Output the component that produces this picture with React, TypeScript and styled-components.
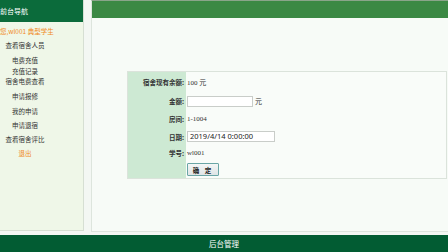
import styled, { createGlobalStyle } from "styled-components";

const GlobalStyle = createGlobalStyle`
  html, body {
    margin: 0;
    padding: 0;
    background: #f3f7f3;
    font-family: "Noto Sans CJK SC", "Noto Sans", sans-serif;
  }
`

const Page = styled.div`
  width: 448px;
  height: 252px;
  display: flex;
  flex-direction: column;
  overflow: hidden;
`

const Main = styled.div`
  flex: 1;
  display: flex;
  gap: 7px;
  padding-bottom: 3px;
`

const Sidebar = styled.aside`
  width: 84px;
  height: 231px;
  box-sizing: border-box;
  background: #eff7e8;
  border-right: 1px solid #d6dfd3;
  border-bottom: 1px solid #d6dfd3;
  overflow: hidden;
`

const SideHeader = styled.div`
  height: 22px;
  background: #0b6b3b;
  color: #ffffff;
  font-size: 7px;
  line-height: 22px;
  white-space: nowrap;
`

const Welcome = styled.div`
  margin-top: 4px;
  height: 10px;
  line-height: 10px;
  font-size: 6.5px;
  color: #f08a24;
  white-space: nowrap;
`

const NavList = styled.ul`
  list-style: none;
  margin: 0;
  padding: 0;
  width: 50px;
`

const NavItem = styled.li<{ $space: number; $exit?: boolean }>`
  margin-top: ${(p) => p.$space}px;
  height: 10px;
  line-height: 10px;
  font-size: 6.5px;
  text-align: center;
  white-space: nowrap;
  color: ${(p) => (p.$exit ? "#f08a24" : "#333333")};
`

const Content = styled.section`
  flex: 1;
  height: 232px;
  box-sizing: border-box;
  background: #f7fbf7;
  border-top: 1px solid #8aa58a;
  border-left: 1px solid #dde5dd;
  border-bottom: 1px solid #dde5dd;
`

const ContentHeader = styled.div`
  height: 17px;
  background: #3b8944;
`

const Form = styled.div`
  margin: 53px 0 0 35px;
  width: 320px;
  box-sizing: border-box;
  border: 1px solid #dbe3db;
  background: #f9fcf9;
`

const Row = styled.div<{ $h: number }>`
  display: grid;
  grid-template-columns: 58px 1fr;
  height: ${(p) => p.$h}px;
`

const Label = styled.div`
  background: #cde9d3;
  padding-right: 2px;
  font-size: 6.5px;
  font-weight: bold;
  color: #333333;
  display: flex;
  align-items: center;
  justify-content: flex-end;
`

const Value = styled.div`
  display: flex;
  align-items: center;
  gap: 2px;
  padding-left: 1px;
  font-family: "Liberation Serif", "Noto Sans CJK SC", serif;
  font-size: 7px;
  color: #333333;
`

const Field = styled.div<{ $w: number }>`
  width: ${(p) => p.$w}px;
  height: 11px;
  box-sizing: border-box;
  border: 1px solid #c9cdc9;
  background: #ffffff;
  font-family: "Noto Sans", sans-serif;
  font-size: 7.5px;
  line-height: 9px;
  padding-left: 2px;
  color: #222222;
`

const Button = styled.button`
  width: 32px;
  height: 13px;
  padding: 0;
  box-sizing: border-box;
  border: 1px solid #6aa6a6;
  border-radius: 1px;
  background: linear-gradient(#f4f6f6, #dfe5e6);
  font-family: "Noto Sans CJK SC", sans-serif;
  font-size: 6.5px;
  font-weight: bold;
  color: #222222;
  letter-spacing: 2px;
`

const Footer = styled.footer`
  height: 17px;
  background: #025c33;
  color: #ffffff;
  font-size: 7.5px;
  line-height: 18px;
  text-align: center;
`

const navItems = [
  { text: "查看宿舍人员", space: 4 },
  { text: "电费充值", space: 5 },
  { text: "充值记录", space: 1 },
  { text: "宿舍电费查看", space: 0 },
  { text: "申请报修", space: 5 },
  { text: "我的申请", space: 5 },
  { text: "申请退宿", space: 4 },
  { text: "查看宿舍评比", space: 4 },
]

export default function App() {
  return (
    <>
      <GlobalStyle />
      <Page>
        <Main>
          <Sidebar>
            <SideHeader>前台导航</SideHeader>
            <Welcome>您,wl001 典型学生</Welcome>
            <NavList>
              {navItems.map((item) => (
                <NavItem key={item.text} $space={item.space}>
                  {item.text}
                </NavItem>
              ))}
              <NavItem $space={4} $exit>
                退出
              </NavItem>
            </NavList>
          </Sidebar>
          <Content>
            <ContentHeader />
            <Form>
              <Row $h={20}>
                <Label>宿舍现有余额:</Label>
                <Value>100 元</Value>
              </Row>
              <Row $h={18}>
                <Label>金额:</Label>
                <Value>
                  <Field $w={66} />
                  <span>元</span>
                </Value>
              </Row>
              <Row $h={18}>
                <Label>房间:</Label>
                <Value>1-1004</Value>
              </Row>
              <Row $h={17}>
                <Label>日期:</Label>
                <Value>
                  <Field $w={88}>2019/4/14 0:00:00</Field>
                </Value>
              </Row>
              <Row $h={16}>
                <Label>学号:</Label>
                <Value>wl001</Value>
              </Row>
              <Row $h={17}>
                <Label />
                <Value>
                  <Button>确 定</Button>
                </Value>
              </Row>
            </Form>
          </Content>
        </Main>
        <Footer>后台管理</Footer>
      </Page>
    </>
  )
}
